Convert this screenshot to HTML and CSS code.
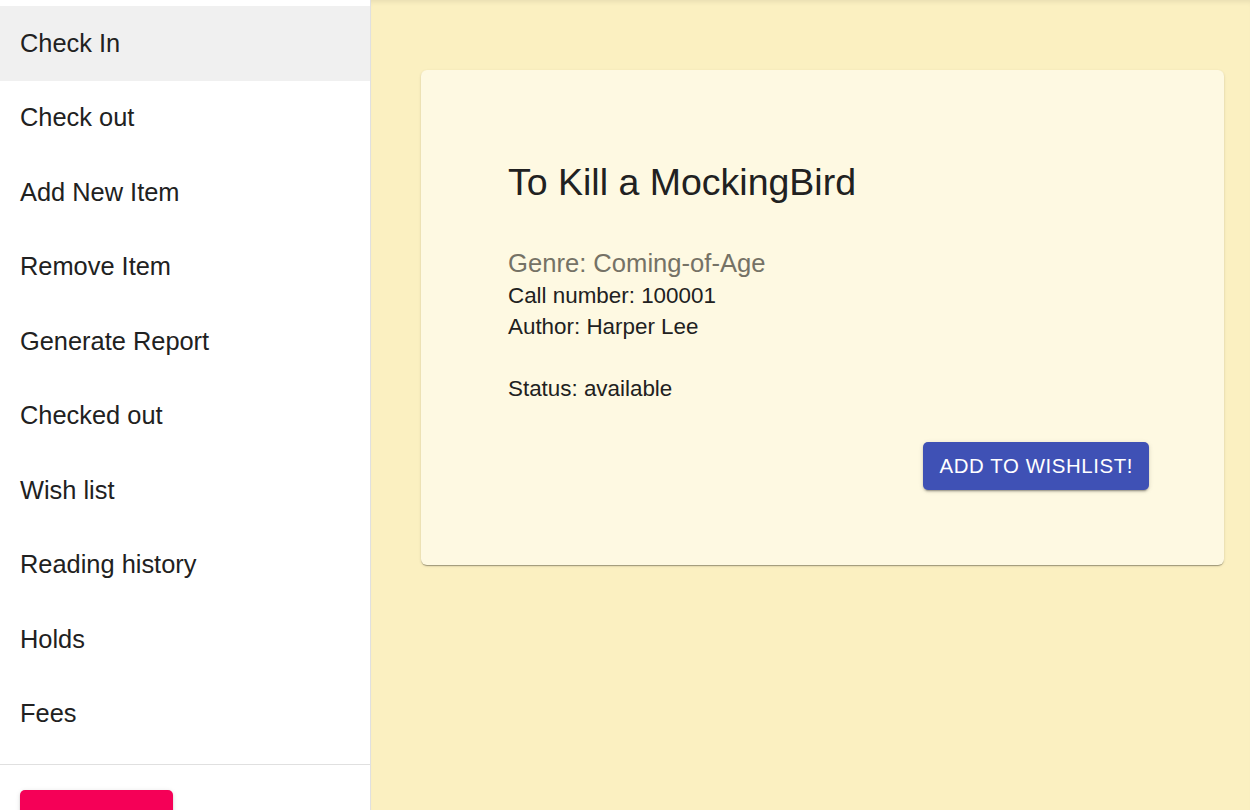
FILE: index.html
```html
<!DOCTYPE html>
<html>
<head>
<meta charset="utf-8">
<link rel="stylesheet" href="styles.css">
</head>
<body>
<div class="app">
  <nav class="sidebar">
    <ul class="menu">
      <li class="item active">Check In</li>
      <li class="item">Check out</li>
      <li class="item">Add New Item</li>
      <li class="item">Remove Item</li>
      <li class="item">Generate Report</li>
      <li class="item">Checked out</li>
      <li class="item">Wish list</li>
      <li class="item">Reading history</li>
      <li class="item">Holds</li>
      <li class="item">Fees</li>
    </ul>
    <hr class="divider">
    <div class="footer">
      <button class="logout" aria-label="Logout"></button>
    </div>
  </nav>
  <main class="main">
    <section class="card">
      <h1 class="title">To Kill a MockingBird</h1>
      <p class="genre">Genre: Coming-of-Age</p>
      <p class="line">Call number: 100001</p>
      <p class="line">Author: Harper Lee</p>
      <p class="line blank">&nbsp;</p>
      <p class="line">Status: available</p>
      <div class="actions">
        <button class="wish">ADD TO WISHLIST!</button>
      </div>
    </section>
  </main>
</div>
</body>
</html>
```
FILE: styles.css
```css
html, body {
  margin: 0;
  padding: 0;
  height: 810px;
  overflow: hidden;
  font-family: "Liberation Sans", Arial, sans-serif;
  color: rgba(0, 0, 0, 0.87);
}

.app {
  display: flex;
  height: 810px;
}

.sidebar {
  width: 370px;
  flex: none;
  background: #ffffff;
  border-right: 1px solid #e0e0e0;
  display: flex;
  flex-direction: column;
}

.menu {
  list-style: none;
  margin: 0;
  padding: 6px 0 0 0;
}

.item {
  height: 74.5px;
  display: flex;
  align-items: center;
  padding-left: 20px;
  font-size: 25.4px;
  color: #212121;
}

.item.active {
  background: #f0f0f0;
}

.divider {
  margin: 13px 0 0 0;
  border: 0;
  border-top: 1px solid #e0e0e0;
  height: 0;
}

.footer {
  padding: 25px 20px 0 20px;
}

.logout {
  display: block;
  width: 153px;
  height: 48px;
  border: 0;
  border-radius: 5px;
  background: #f50057;
  box-shadow: 0 3px 1px -2px rgba(0,0,0,0.2), 0 2px 2px 0 rgba(0,0,0,0.14), 0 1px 5px 0 rgba(0,0,0,0.12);
}

.main {
  flex: 1;
  background: #fbf0c1;
  padding: 70px 26px 0 50px;
  box-shadow: inset 0 5px 5px -3px rgba(0,0,0,0.08);
}

.card {
  width: 803px;
  box-sizing: border-box;
  background: #fef9e2;
  border-radius: 6px;
  padding: 90px 75px 75px 87px;
  box-shadow: 0 2px 1px -1px rgba(0,0,0,0.2), 0 1px 1px 0 rgba(0,0,0,0.14), 0 1px 3px 0 rgba(0,0,0,0.12);
}

.title {
  margin: 0;
  font-size: 37.5px;
  font-weight: 400;
  line-height: 44px;
  color: #212121;
}

.genre {
  margin: 43px 0 0 0;
  font-size: 25.6px;
  line-height: 33px;
  color: #757266;
}

.line {
  margin: 0;
  font-size: 22.4px;
  line-height: 31px;
  color: #212121;
}

.actions {
  display: flex;
  justify-content: flex-end;
  margin-top: 38px;
}

.wish {
  height: 48px;
  padding: 0 16px;
  border: 0;
  border-radius: 5px;
  background: #3f51b5;
  color: #ffffff;
  font-family: "Liberation Sans", Arial, sans-serif;
  font-size: 20.4px;
  letter-spacing: 0.6px;
  box-shadow: 0 3px 1px -2px rgba(0,0,0,0.2), 0 2px 2px 0 rgba(0,0,0,0.14), 0 1px 5px 0 rgba(0,0,0,0.12);
}
```
